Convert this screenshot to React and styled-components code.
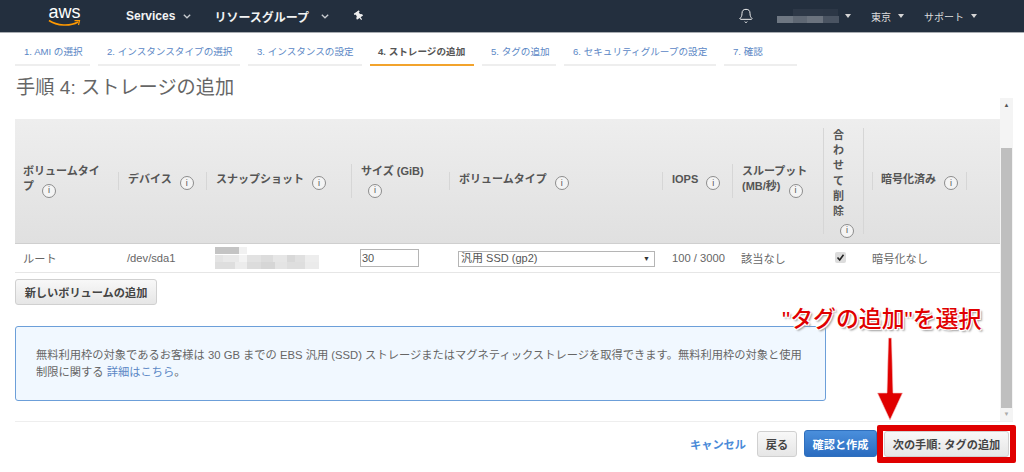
import React from "react";
import styled, { createGlobalStyle } from "styled-components";
import { Bell } from "lucide-react";
import { FaThumbtack } from "react-icons/fa";

const FONT = `"Liberation Sans", "Noto Sans CJK JP", sans-serif`;
const COLUMNS = "104px 88px 145px 98px 213px 70px 91px 40px 1fr";

const Global = createGlobalStyle`
  html, body { margin: 0; padding: 0; background: #fff; }
  body { width: 1024px; height: 472px; overflow: hidden; font-family: ${FONT}; color: #555; }
  * { box-sizing: border-box; }
`;

const Page = styled.div`
  position: relative;
  width: 1024px;
  height: 472px;
  overflow: hidden;
  display: flex;
  flex-direction: column;
`;

const TopBar = styled.header`
  height: 33px;
  flex: none;
  display: flex;
  align-items: center;
  background: #232f3e;
  border-bottom: 1px solid #a9adb2;
  color: #eee;
  padding: 0 47px 0 48px;
`;
const Logo = styled.div`
  width: 33px;
  height: 28px;
  margin-right: 45px;
  display: flex;
  flex-direction: column;
  align-items: center;
  color: #fff;
  font-size: 18px;
  line-height: 16px;
  padding-top: 2px;
  svg { margin-top: -1px; }
`;
const NavItem = styled.span`
  font-size: ${(p) => p.$size || 12}px;
  font-weight: ${(p) => (p.$light ? 400 : 700)};
  color: ${(p) => (p.$light ? "#ddd" : "#f2f3f3")};
  margin-right: ${(p) => p.$gap || 0}px;
  margin-left: ${(p) => p.$ml || 0}px;
  display: flex;
  align-items: center;
  white-space: nowrap;
`;
const Right = styled.div`
  margin-left: auto;
  display: flex;
  align-items: center;
`;
const PinIcon = styled(FaThumbtack)`
  color: #eee;
  font-size: 10px;
  transform: rotate(-35deg);
`;

const Chevron = ({ gap }) => (
  <svg width="8" height="5" viewBox="0 0 8 5" style={{ marginLeft: gap }}>
    <path d="M.8.8 4 3.8 7.2.8" fill="none" stroke="#c8ccd0" strokeWidth="1.3" />
  </svg>
);
const Caret = ({ gap }) => (
  <svg width="6" height="4" viewBox="0 0 6 4" style={{ marginLeft: gap }}>
    <path d="M0 0h6L3 4z" fill="#d5d5d5" />
  </svg>
);

const Mosaic = ({ cells, w, h, size }) => (
  <svg width={w} height={h} viewBox={`0 0 ${w} ${h}`} shapeRendering="crispEdges">
    {cells.map(([x, y, cw, c], i) => (
      <rect key={i} x={x} y={y} width={cw} height={size} fill={c} />
    ))}
  </svg>
);

const userCells = [
  [16, 0, 30, "#2d3847"], [46, 0, 15, "#2c3746"],
  [0, 7, 16, "#6e7782"], [16, 7, 14, "#5f6874"], [30, 7, 16, "#6b737e"], [46, 7, 16, "#4a5462"],
];
const snapCells = [
  [0, 0, 24, "#c4c4c4"], [24, 0, 8, "#f1f1f1"],
  [0, 8, 8, "#e4e4e4"], [8, 8, 16, "#e9e9e9"], [24, 8, 8, "#f3f3f3"], [32, 8, 14, "#e2e2e2"], [46, 8, 12, "#dcdcdc"], [58, 8, 14, "#e6e6e6"], [72, 8, 8, "#d8d8d8"], [80, 8, 10, "#e0e0e0"], [90, 8, 14, "#ededed"],
  [0, 15, 20, "#dedede"], [20, 15, 12, "#ececec"], [32, 15, 14, "#dcdcdc"], [46, 15, 14, "#d6d6d6"], [60, 15, 12, "#e4e4e4"], [72, 15, 18, "#dedede"], [90, 15, 14, "#ebebeb"],
];

const Tabs = styled.nav`
  height: 33px;
  flex: none;
  display: flex;
  gap: 8px;
  padding-left: 15px;
`;
const Tab = styled.a`
  width: ${(p) => p.$w}px;
  height: 33px;
  padding: 13px 0 0 ${(p) => (p.$active ? 8 : 9)}px;
  font-size: 9.6px;
  line-height: 12px;
  white-space: nowrap;
  color: ${(p) => (p.$active ? "#555" : "#5b87c5")};
  font-weight: ${(p) => (p.$active ? 700 : 400)};
  border-bottom: 2px solid ${(p) => (p.$active ? "#f2a32c" : "#eee")};
`;

const Title = styled.h1`
  margin: 0;
  height: 32px;
  flex: none;
  padding: 10px 0 0 16px;
  font-size: 19.2px;
  line-height: 24px;
  font-weight: 400;
  color: #666;
`;

const ScrollArea = styled.div`
  height: 323px;
  flex: none;
  display: flex;
`;
const Content = styled.div`
  width: 985px;
  margin-left: 15px;
  padding-top: 21px;
`;
const Grid = styled.div`
  display: grid;
  grid-template-columns: ${COLUMNS};
`;
const HeadRow = styled(Grid)`
  height: 125px;
  align-items: center;
  background: linear-gradient(#eeeeee, #e0e0e0);
  border-bottom: 1px solid #cfcfcf;
`;
const HeadCell = styled.div`
  padding: 0 0 0 ${(p) => (p.$first ? 8 : 9)}px;
  font-size: 11px;
  font-weight: 700;
  line-height: 15px;
  color: #555;
  white-space: nowrap;
  border-left: ${(p) => (p.$first ? "none" : "1px solid #d6d6d6")};
  margin-left: ${(p) => (p.$first ? 0 : -1)}px;
`;
const StackCell = styled(HeadCell)`
  white-space: normal;
  width: 41px;
  height: 106px;
  border-right: 1px solid #d6d6d6;
`;
const StackText = styled.div`
  width: 12px;
  line-height: 15.2px;
`;
const EncCell = styled(HeadCell)`
  margin-left: 8px;
  padding-left: 8px;
  width: 95px;
  border-right: 1px solid #d6d6d6;
`;
const InfoMark = styled.span`
  display: inline-flex;
  align-items: center;
  justify-content: center;
  width: 14px;
  height: 14px;
  margin-left: ${(p) => (p.$gap === undefined ? 8 : p.$gap)}px;
  border: 1px solid #8c8c8c;
  border-radius: 50%;
  font-size: 9px;
  line-height: 1;
  font-weight: 400;
  color: #555;
  background: #f4f4f4;
  vertical-align: -3px;
`;
const InfoIcon = ({ gap }) => <InfoMark $gap={gap}>i</InfoMark>;

const BodyRow = styled(Grid)`
  height: 29px;
  align-items: center;
  border-bottom: 1px solid #e6e6e6;
`;
const BodyCell = styled.div`
  padding-left: ${(p) => (p.$pad === undefined ? 8 : p.$pad)}px;
  font-size: 11.2px;
  color: #666;
  white-space: nowrap;
  display: flex;
  align-items: center;
  margin-top: -1px;
`;
const SizeInput = styled.input`
  width: 59px;
  height: 18px;
  padding: 0 1px;
  border: 1px solid #b5b5b5;
  font: 11px ${FONT};
  color: #555;
  background: #fff;
`;
const VolumeSelect = styled.div`
  width: 197px;
  height: 16px;
  margin-top: 2px;
  padding: 0 4px 0 2px;
  border: 1px solid #b5b5b5;
  font-size: 11px;
  line-height: 15px;
  color: #555;
  display: flex;
  justify-content: space-between;
  align-items: center;
`;
const SelectArrow = styled.span`
  font-size: 7px;
  color: #333;
`;
const CheckBox = styled.span`
  width: 11px;
  height: 11px;
  border-radius: 2px;
  background: #dcdcdc;
  display: flex;
  align-items: center;
  justify-content: center;
`;

const AddButton = styled.button`
  display: block;
  margin-top: 6px;
  width: 142px;
  height: 26px;
  border: 1px solid #d0d0d0;
  border-radius: 3px;
  background: linear-gradient(#f8f8f8, #e6e6e6);
  font: 700 11.2px ${FONT};
  color: #444;
  padding: 0;
`;
const InfoBox = styled.div`
  margin-top: 21px;
  width: 811px;
  height: 75px;
  padding: 20px 20px 0;
  border: 1px solid #6c9fd9;
  border-radius: 3px;
  background: #f1f8ff;
  font-size: 11.28px;
  line-height: 17px;
  color: #666;
  white-space: nowrap;
`;
const DocLink = styled.a`
  color: #5b87c5;
`;

const ScrollBar = styled.div`
  width: 13px;
  flex: none;
  display: flex;
  flex-direction: column;
  align-items: center;
  background: #f4f4f4;
`;
const ScrollBtn = styled.div`
  height: ${(p) => p.$h}px;
  flex: none;
  display: flex;
  align-items: center;
  justify-content: center;
  font-size: 6px;
  color: ${(p) => p.$color};
`;
const Thumb = styled.div`
  width: 11px;
  height: 260px;
  margin-top: 37px;
  background: #bfbfbf;
`;

const Footer = styled.footer`
  margin: 0 11px 0 15px;
  border-top: 1px solid #eee;
  padding: 8px 4px 0 0;
  display: flex;
  justify-content: flex-end;
  align-items: center;
  gap: 7px;
`;
const CancelLink = styled.a`
  font-size: 11.2px;
  font-weight: 700;
  color: #4a8ad8;
  margin-right: 4px;
`;
const FootButton = styled.button`
  height: ${(p) => p.$h || 26}px;
  width: ${(p) => p.$w}px;
  padding: 0;
  border: 1px solid ${(p) => (p.$primary ? "#2f6fbd" : "#d0d0d0")};
  border-radius: 3px;
  background: ${(p) => (p.$primary ? "linear-gradient(#4a8fdc, #2a6cc0)" : "linear-gradient(#f8f8f8, #e6e6e6)")};
  color: ${(p) => (p.$primary ? "#fff" : "#444")};
  font: 700 11.2px ${FONT};
  white-space: nowrap;
`;

const Annotation = styled.div`
  position: absolute;
  left: 782px;
  top: 305px;
  font-size: 22.9px;
  line-height: 28px;
  font-weight: 500;
  white-space: nowrap;
  color: #e00000;
  text-shadow: -1px -1px 0 #fff, 1px -1px 0 #fff, -1px 1px 0 #fff, 1px 1px 0 #fff, 2px 2px 2px #999;
`;
const ArrowMark = styled.svg`
  position: absolute;
  left: 876px;
  top: 336px;
`;
const RedFrame = styled.div`
  position: absolute;
  left: 877px;
  top: 425px;
  width: 139px;
  height: 38px;
  border: 6px solid #e00000;
  border-radius: 2px;
`;

const tabs = [
  ["1. AMI の選択", 75],
  ["2. インスタンスタイプの選択", 142],
  ["3. インスタンスの設定", 114],
  ["4. ストレージの追加", 104, true],
  ["5. タグの追加", 74],
  ["6. セキュリティグループの設定", 152],
  ["7. 確認", 73],
];

export default function App() {
  return (
    <Page>
      <Global />
      <TopBar>
        <Logo>
          aws
          <svg width="33" height="8" viewBox="0 0 33 8">
            <path d="M1 1.5C9 7 22 7.5 30 3" fill="none" stroke="#f90" strokeWidth="1.6" />
            <path d="M26.5 1.6 31.5 1.5 30.5 6" fill="none" stroke="#f90" strokeWidth="1.2" />
          </svg>
        </Logo>
        <NavItem $size={12} $gap={23}>
          Services
          <Chevron gap={8} />
        </NavItem>
        <NavItem $size={12} $gap={25}>
          リソースグループ
          <Chevron gap={12} />
        </NavItem>
        <PinIcon />
        <Right>
          <Bell size={16} strokeWidth={1.5} color="#eee" />
          <NavItem as="div" $ml={23}>
            <Mosaic cells={userCells} w={62} h={14} size={7} />
            <Caret gap={6} />
          </NavItem>
          <NavItem $light $size={10} $ml={20}>
            東京
            <Caret gap={7} />
          </NavItem>
          <NavItem $light $size={10} $ml={20}>
            サポート
            <Caret gap={7} />
          </NavItem>
        </Right>
      </TopBar>

      <Tabs>
        {tabs.map(([label, w, active]) => (
          <Tab key={label} $w={w} $active={active}>
            {label}
          </Tab>
        ))}
      </Tabs>

      <Title>手順 4: ストレージの追加</Title>

      <ScrollArea>
        <Content>
          <HeadRow>
            <HeadCell $first>
              ボリュームタイ
              <br />プ<InfoIcon />
            </HeadCell>
            <HeadCell>
              デバイス
              <InfoIcon />
            </HeadCell>
            <HeadCell>
              スナップショット
              <InfoIcon />
            </HeadCell>
            <HeadCell>
              サイズ (GiB)
              <br />
              <InfoIcon gap={7} />
            </HeadCell>
            <HeadCell>
              ボリュームタイプ
              <InfoIcon />
            </HeadCell>
            <HeadCell>
              IOPS
              <InfoIcon />
            </HeadCell>
            <HeadCell>
              スループット
              <br />
              (MB/秒)
              <InfoIcon />
            </HeadCell>
            <StackCell>
              <StackText>合わせて削除</StackText>
              <InfoIcon gap={7} />
            </StackCell>
            <EncCell>
              暗号化済み
              <InfoIcon />
            </EncCell>
          </HeadRow>
          <BodyRow>
            <BodyCell>ルート</BodyCell>
            <BodyCell>/dev/sda1</BodyCell>
            <BodyCell>
              <Mosaic cells={snapCells} w={104} h={22} size={7} />
            </BodyCell>
            <BodyCell>
              <SizeInput defaultValue="30" />
            </BodyCell>
            <BodyCell>
              <VolumeSelect>
                汎用 SSD (gp2)
                <SelectArrow>▼</SelectArrow>
              </VolumeSelect>
            </BodyCell>
            <BodyCell $pad={9}>100 / 3000</BodyCell>
            <BodyCell>該当なし</BodyCell>
            <BodyCell $pad={11}>
              <CheckBox>
                <svg width="9" height="9" viewBox="0 0 9 9">
                  <path d="M1.5 4.5 3.7 7 7.5 1.8" fill="none" stroke="#222" strokeWidth="1.6" />
                </svg>
              </CheckBox>
            </BodyCell>
            <BodyCell>暗号化なし</BodyCell>
          </BodyRow>
          <AddButton>新しいボリュームの追加</AddButton>
          <InfoBox>
            無料利用枠の対象であるお客様は 30 GB までの EBS 汎用 (SSD) ストレージまたはマグネティックストレージを取得できます。無料利用枠の対象と使用
            <br />
            制限に関する <DocLink>詳細はこちら</DocLink>。
          </InfoBox>
        </Content>
        <ScrollBar>
          <ScrollBtn $h={13} $color="#555">▲</ScrollBtn>
          <Thumb />
          <ScrollBtn $h={12} $color="#aaa">▼</ScrollBtn>
        </ScrollBar>
      </ScrollArea>

      <Footer>
        <CancelLink>キャンセル</CancelLink>
        <FootButton $w={40}>戻る</FootButton>
        <FootButton $w={73} $h={27} $primary>確認と作成</FootButton>
        <FootButton $w={125}>次の手順: タグの追加</FootButton>
      </Footer>

      <Annotation>"タグの追加"を選択</Annotation>
      <ArrowMark width="30" height="86" viewBox="0 0 30 86">
        <path d="M12.5 2h3L17 57h9.5L14 84 1.5 57H11z" fill="#e00000" stroke="#f4c4c4" strokeWidth="0.6" />
      </ArrowMark>
      <RedFrame />
    </Page>
  );
}
